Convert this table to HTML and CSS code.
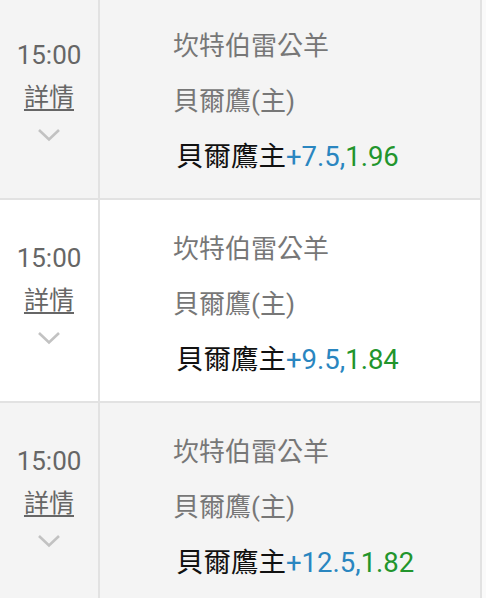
FILE: index.html
```html
<!DOCTYPE html>
<html lang="zh-Hant">
<head>
<meta charset="utf-8">
<link rel="stylesheet" href="styles.css">
</head>
<body>
<div class="list">
  <div class="row">
    <div class="side">
      <div class="time">15:00</div>
      <a class="detail">詳情</a>
      <svg class="chev" width="24" height="14" viewBox="0 0 24 14"><path d="M2 2 L12 11.5 L22 2" fill="none" stroke="#c2c2c2" stroke-width="2.6"/></svg>
    </div>
    <div class="main">
      <div class="line">坎特伯雷公羊</div>
      <div class="line">貝爾鷹(主)</div>
      <div class="line bet">貝爾鷹主<span class="hc">+7.5,</span><span class="odds">1.96</span></div>
    </div>
  </div>
  <div class="row alt">
    <div class="side">
      <div class="time">15:00</div>
      <a class="detail">詳情</a>
      <svg class="chev" width="24" height="14" viewBox="0 0 24 14"><path d="M2 2 L12 11.5 L22 2" fill="none" stroke="#c2c2c2" stroke-width="2.6"/></svg>
    </div>
    <div class="main">
      <div class="line">坎特伯雷公羊</div>
      <div class="line">貝爾鷹(主)</div>
      <div class="line bet">貝爾鷹主<span class="hc">+9.5,</span><span class="odds">1.84</span></div>
    </div>
  </div>
  <div class="row">
    <div class="side">
      <div class="time">15:00</div>
      <a class="detail">詳情</a>
      <svg class="chev" width="24" height="14" viewBox="0 0 24 14"><path d="M2 2 L12 11.5 L22 2" fill="none" stroke="#c2c2c2" stroke-width="2.6"/></svg>
    </div>
    <div class="main">
      <div class="line">坎特伯雷公羊</div>
      <div class="line">貝爾鷹(主)</div>
      <div class="line bet">貝爾鷹主<span class="hc">+12.5,</span><span class="odds">1.82</span></div>
    </div>
  </div>
</div>
</body>
</html>
```
FILE: styles.css
```css
html, body {
  margin: 0;
  padding: 0;
  background: #fafafa;
  overflow: hidden;
}
body {
  font-family: Roboto, "Noto Sans CJK TC", sans-serif;
}
.list {
  width: 480px;
  margin-top: -3px;
  border-right: 2px solid #e2e2e2;
}
.row {
  display: flex;
  height: 201px;
  background: #f4f4f4;
  border-bottom: 2px solid #e2e2e2;
}
.row.alt {
  background: #ffffff;
}
.side {
  width: 100px;
  flex: none;
  border-right: 2px solid #e2e2e2;
  display: flex;
  flex-direction: column;
  align-items: center;
  padding-top: 43px;
  box-sizing: border-box;
}
.time {
  font-size: 26px;
  line-height: 30px;
  color: #666666;
}
.detail {
  margin-top: 13px;
  font-size: 25px;
  line-height: 30px;
  color: #666666;
  text-decoration: underline;
  text-decoration-thickness: 1.5px;
  text-underline-offset: 3px;
}
.chev {
  margin-top: 15px;
  display: block;
}
.main {
  flex: 1;
  padding-top: 22px;
  padding-left: 73px;
}
.line {
  font-size: 26px;
  line-height: 55px;
  color: #777777;
  white-space: nowrap;
}
.line.bet {
  font-size: 27.5px;
  color: #111111;
  padding-left: 3px;
}
.hc {
  color: #2a86c0;
}
.odds {
  color: #22952c;
}
```
